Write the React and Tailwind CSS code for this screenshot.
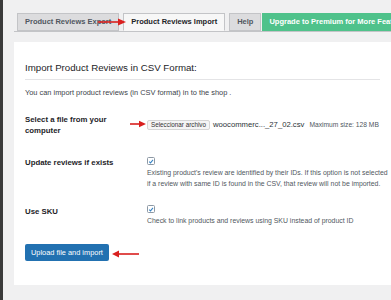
const Check = () => (
  <span className="flex h-[8px] w-[8px] items-center justify-center rounded-[1.5px] border border-[#8c98a4] bg-white">
    <svg viewBox="0 0 10 10" className="h-[7px] w-[7px]">
      <path d="M2 5.2 L4.2 7.4 L8.3 2.4" stroke="#3582c4" strokeWidth="1.7" fill="none" />
    </svg>
  </span>
);

const Tab = ({ children, active }) => (
  <div
    className={
      'flex h-[18px] items-center whitespace-nowrap border border-[#c3c4c7] px-[7px] text-[7.5px] font-bold ' +
      (active ? 'border-b-[#f7f7f7] bg-[#f7f7f7] text-[#1d2327]' : 'bg-[#dcdcde] text-[#50575e]')
    }
  >
    {children}
  </div>
);

export default function App() {
  return (
    <div
      className="relative flex h-[300px] w-[391px] overflow-hidden bg-[#f0f0f1]"
      style={{ fontFamily: '"Liberation Sans", Arial, sans-serif' }}
    >
      <div className="w-[3px] shrink-0 bg-[#3a3a3a]" />
      <div className="flex min-w-0 flex-1 flex-col pl-[11px] pt-[13px]">
        {/* tabs */}
        <div className="-mb-px flex items-end gap-[4px] border-b border-[#c3c4c7] pl-[3px]">
          <Tab>Product Reviews Export</Tab>
          <Tab active>Product Reviews Import</Tab>
          <Tab>Help</Tab>
          <div className="-ml-[3px] flex h-[18px] items-center whitespace-nowrap bg-[#4fc28b] px-[7px] text-[7.5px] font-bold text-white">
            Upgrade to Premium for More Features
          </div>
        </div>

        {/* panel */}
        <div className="mt-[11px] bg-white px-[11px] pb-[24px] pt-[20px]">
          <h2 className="whitespace-nowrap text-[9.7px] leading-[12px] text-[#1d2327]">
            Import Product Reviews in CSV Format:
          </h2>
          <div className="mt-[5px] border-t border-[#e4e4e6]" />
          <p className="mt-[8px] whitespace-nowrap text-[7.4px] leading-[10px] text-[#3c434a]">
            You can import product reviews (in CSV format) in to the shop .
          </p>

          <div className="mt-[16px] flex">
            <div className="w-[122px] shrink-0 text-[7.8px] font-bold leading-[11px] text-[#1d2327]">
              Select a file from your
              <br />
              computer
            </div>
            <div className="mt-[6px] flex h-[10px] items-center whitespace-nowrap">
              <span className="flex h-[10px] items-center rounded-[2px] border border-[#d6d6d6] bg-[#f5f5f5] px-[3px] text-[6.3px] text-[#333]">
                Seleccionar archivo
              </span>
              <span className="ml-[3px] text-[7.7px] text-[#2c3338]">woocommerc..._27_02.csv</span>
              <span className="ml-[5px] text-[6.7px] text-[#50575e]">Maximum size: 128 MB</span>
            </div>
          </div>

          <div className="mt-[21px] flex">
            <div className="w-[122px] shrink-0 text-[7.8px] font-bold leading-[11px] text-[#1d2327]">
              Update reviews if exists
            </div>
            <div className="flex flex-col">
              <Check />
              <p className="mt-[2px] whitespace-nowrap text-[6.9px] leading-[11px] text-[#50575e]">
                Existing product's review are identified by their IDs. If this option is not selected
                <br />
                if a review with same ID is found in the CSV, that review will not be imported.
              </p>
            </div>
          </div>

          <div className="mt-[17px] flex">
            <div className="w-[122px] shrink-0 text-[7.8px] font-bold leading-[11px] text-[#1d2327]">
              Use SKU
            </div>
            <div className="-mt-[1px] flex flex-col">
              <Check />
              <p className="mt-[2px] whitespace-nowrap text-[6.9px] leading-[11px] text-[#50575e]">
                Check to link products and reviews using SKU instead of product ID
              </p>
            </div>
          </div>

          <button className="mt-[18px] flex h-[17px] items-center rounded-[2px] bg-[#2271b1] px-[6px] text-[7.4px] text-white">
            Upload file and import
          </button>
        </div>
      </div>

      {/* annotation arrows */}
      <svg className="absolute left-[98px] top-[18px]" width="28" height="8" viewBox="0 0 28 8">
        <line x1="0" y1="4" x2="22" y2="4" stroke="#d9201f" strokeWidth="1.6" />
        <polygon points="20,0.5 28,4 20,7.5" fill="#d9201f" />
      </svg>
      <svg className="absolute left-[130px] top-[120px]" width="16" height="8" viewBox="0 0 16 8">
        <line x1="0" y1="4" x2="10" y2="4" stroke="#d9201f" strokeWidth="1.6" />
        <polygon points="9,0.8 16,4 9,7.2" fill="#d9201f" />
      </svg>
      <svg className="absolute left-[112px] top-[250px]" width="27" height="8" viewBox="0 0 27 8">
        <polygon points="0,4 7,0.5 7,7.5" fill="#d9201f" />
        <line x1="6" y1="4" x2="27" y2="4" stroke="#d9201f" strokeWidth="1.6" />
      </svg>
    </div>
  );
}
